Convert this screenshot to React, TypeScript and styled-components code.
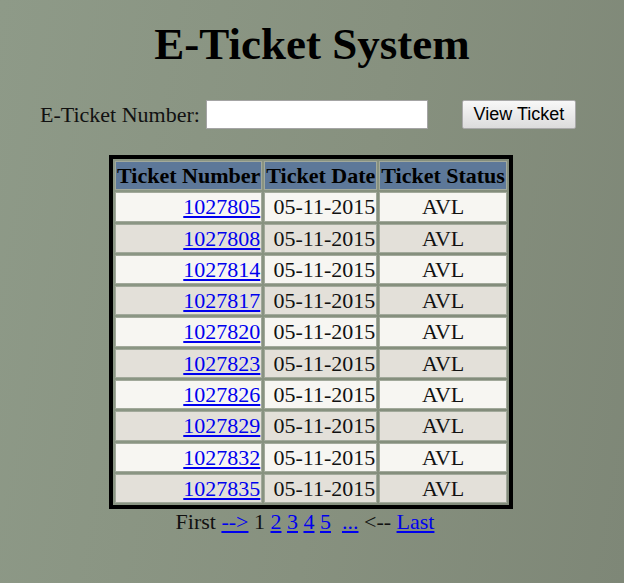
import React from "react";
import styled, { createGlobalStyle } from "styled-components";

const GlobalStyle = createGlobalStyle`
  html, body {
    margin: 0;
    padding: 0;
  }
  body {
    width: 624px;
    height: 583px;
    overflow: hidden;
    background: linear-gradient(100deg, #8e9a88 0%, #87917f 55%, #7e8777 100%);
    font-family: "Liberation Serif", "Times New Roman", serif;
    color: #000;
  }
`;

const Page = styled.div`
  display: flex;
  flex-direction: column;
  align-items: center;
  padding-top: 18px;
`;

const Title = styled.h1`
  margin: 0;
  font-size: 45px;
  font-weight: bold;
  line-height: 52px;
`;

const Form = styled.form`
  display: flex;
  align-items: center;
  margin-top: 30px;
  margin-left: -8px;
`;

const Label = styled.label`
  font-size: 22px;
  color: #111;
  margin-right: 6px;
`;

const Input = styled.input`
  width: 222px;
  height: 29px;
  box-sizing: border-box;
  border: 1px solid #a4a4a4;
  background: #fff;
  margin-right: 34px;
`;

const Button = styled.button`
  width: 114px;
  height: 29px;
  box-sizing: border-box;
  border: 1px solid #a9a9a9;
  border-radius: 2px;
  background: linear-gradient(#f8f8f8, #dcdcdc);
  font-family: "Liberation Sans", Arial, sans-serif;
  font-size: 18px;
  color: #000;
  padding: 0;
`;

const Table = styled.table`
  margin-top: 26px;
  margin-left: -2px;
  border: 4px solid #000;
  border-spacing: 2px;
  font-size: 22px;
  line-height: 25.3px;
`;

const HeadCell = styled.th`
  background: #5d7899;
  border: 1px solid #a2a99b;
  padding: 1px 1px;
  font-weight: bold;
  white-space: nowrap;
`;

const Cell = styled.td<{ $align: "left" | "right" | "center"; $alt: boolean }>`
  background: ${(p) => (p.$alt ? "#e3e0d9" : "#f7f6f2")};
  border: 1px solid #a2a99b;
  padding: 1px 1px;
  text-align: ${(p) => p.$align};
  color: #111;
  white-space: nowrap;
`;

const Link = styled.a`
  color: #0000ee;
  text-decoration: underline;
`;

const Pager = styled.div`
  font-size: 22px;
  color: #111;
  margin-top: 0px;
  margin-left: -14px;
  white-space: pre;
`;

const tickets = [
  "1027805",
  "1027808",
  "1027814",
  "1027817",
  "1027820",
  "1027823",
  "1027826",
  "1027829",
  "1027832",
  "1027835",
];

export default function App() {
  return (
    <>
      <GlobalStyle />
      <Page>
        <Title>E-Ticket System</Title>
        <Form onSubmit={(e) => e.preventDefault()}>
          <Label htmlFor="tn">E-Ticket Number:</Label>
          <Input id="tn" type="text" />
          <Button type="submit">View Ticket</Button>
        </Form>
        <Table>
          <thead>
            <tr>
              <HeadCell>Ticket Number</HeadCell>
              <HeadCell>Ticket Date</HeadCell>
              <HeadCell>Ticket Status</HeadCell>
            </tr>
          </thead>
          <tbody>
            {tickets.map((t, i) => (
              <tr key={t}>
                <Cell $align="right" $alt={i % 2 === 1}>
                  <Link href="#">{t}</Link>
                </Cell>
                <Cell $align="right" $alt={i % 2 === 1}>
                  05-11-2015
                </Cell>
                <Cell $align="center" $alt={i % 2 === 1}>
                  AVL
                </Cell>
              </tr>
            ))}
          </tbody>
        </Table>
        <Pager>
          First <Link href="#">--&gt;</Link> 1 <Link href="#">2</Link>{" "}
          <Link href="#">3</Link> <Link href="#">4</Link>{" "}
          <Link href="#">5</Link>{"  "}
          <Link href="#">...</Link> &lt;-- <Link href="#">Last</Link>
        </Pager>
      </Page>
    </>
  );
}
